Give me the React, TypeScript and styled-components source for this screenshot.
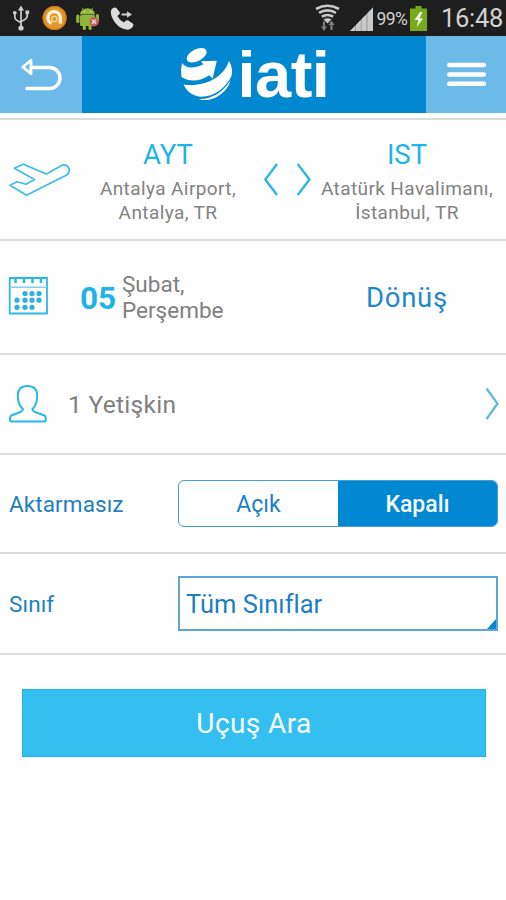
import React from "react";
import styled, { createGlobalStyle } from "styled-components";

const GlobalStyle = createGlobalStyle`
  * { box-sizing: border-box; }
  body { margin: 0; background: #fefefe; font-family: Roboto, "Noto Sans", sans-serif; font-variant-ligatures: none; }
  button { font-family: inherit; border: 0; padding: 0; margin: 0; background: none; }
  svg { display: block; flex: none; }
`;

const Screen = styled.div`
  width: 506px;
  height: 900px;
  display: flex;
  flex-direction: column;
  background: #fefefe;
  overflow: hidden;
`;

const StatusBar = styled.div`
  height: 36px;
  flex: none;
  display: flex;
  justify-content: space-between;
  background: #1e1e1e;
`;

const StatusGroup = styled.div`
  display: flex;
  width: 194px;
`;

const StatusText = styled.span<{ $size: number; $spacing: number; $width: number; $left: number; $top: number }>`
  flex: none;
  width: ${(p) => p.$width}px;
  color: #d2d2d2;
  font-size: ${(p) => p.$size}px;
  letter-spacing: ${(p) => p.$spacing}px;
  line-height: 22px;
  padding-top: ${(p) => p.$top}px;
  margin-left: ${(p) => p.$left}px;
  white-space: nowrap;
`;

const Header = styled.header`
  height: 77px;
  flex: none;
  display: grid;
  grid-template-columns: 82px 344px 80px;
  background: #0288d1;
`;

const HeaderButton = styled.button`
  background: #6cbae8;
`;

const Brand = styled.div`
  display: flex;
  padding-left: 97px;
`;

const BrandName = styled.span`
  margin-left: 2.5px;
  padding-top: 3px;
  font: bold 65px/72px "Liberation Sans", Arial, sans-serif;
  letter-spacing: -0.5px;
  color: #fff;
`;

const HeaderShadow = styled.div`
  height: 7px;
  flex: none;
  border-bottom: 2px solid #dcdcda;
`;

const Row = styled.section<{ $height: number }>`
  height: ${(p) => p.$height}px;
  flex: none;
  display: flex;
  align-items: center;
  border-bottom: 2px solid #dcdcdc;
`;

const RouteRow = styled(Row)`
  display: grid;
  grid-template-columns: 78px 180px 54px 190px;
  align-items: start;
`;

const Airport = styled.div`
  display: flex;
  flex-direction: column;
  align-items: center;
  padding-top: 17px;
`;

const Code = styled.div`
  font-size: 27.5px;
  line-height: 36px;
  color: #1fb4e6;
`;

const Place = styled.div`
  margin-top: 4px;
  font-size: 19px;
  line-height: 23.5px;
  letter-spacing: 0.4px;
  text-align: center;
  color: #828282;
  white-space: nowrap;
`;

const Day = styled.strong`
  margin-left: 32px;
  width: 42px;
  padding-top: 2px;
  font-size: 31.5px;
  color: #1fb4e6;
`;

const DateText = styled.div`
  width: 244px;
  font-size: 22.5px;
  line-height: 26.5px;
  color: #808080;
`;

const ReturnLabel = styled.div`
  padding-top: 1px;
  font-size: 27.5px;
  letter-spacing: 0.7px;
  color: #1e88cf;
`;

const Passengers = styled.div`
  margin-left: 20px;
  flex: 1;
  font-size: 24.5px;
  letter-spacing: 0.3px;
  color: #808080;
`;

const Label = styled.div`
  width: 178px;
  padding-left: 9px;
  font-size: 22.5px;
  letter-spacing: 0.1px;
  color: #1e7fc4;
`;

const Segmented = styled.div`
  width: 320px;
  height: 47px;
  display: grid;
  grid-template-columns: 1fr 1fr;
  border: 1.5px solid #4a9bd8;
  border-radius: 6px;
  overflow: hidden;
`;

const Segment = styled.button<{ $active?: boolean }>`
  padding-top: 1px;
  font-size: 23px;
  letter-spacing: 0;
  font-weight: ${(p) => (p.$active ? 500 : 400)};
  color: ${(p) => (p.$active ? "#f4fbff" : "#1e7fc4")};
  background: ${(p) => (p.$active ? "#0288d1" : "transparent")};
`;

const Select = styled.div`
  width: 320px;
  height: 55px;
  display: flex;
  align-items: center;
  justify-content: space-between;
  border: 2px solid #5fa5da;
  padding-left: 6px;
  font-size: 25.5px;
  color: #1e7fc4;
`;

const Corner = styled.svg`
  align-self: flex-end;
`;

const SearchButton = styled.button`
  margin: 34px 20px 0 22px;
  height: 68px;
  flex: none;
  border: 1.5px solid #1cb5e8;
  background: #35bff1;
  color: #f6fdff;
  font-size: 28px;
  letter-spacing: 0.4px;
`;

const StatusIcons = () => (
  <svg width="140" height="36" viewBox="0 0 140 36">
    <g fill="none" stroke="#cfcfcf" strokeWidth="1.7">
      <path d="M21 9v18M14.8 12v5q0 3 6 5.5M27.2 12v4q0 3-6 5.5" />
    </g>
    <g fill="#cfcfcf">
      <path d="M21 5.5l3 5h-6z" />
      <circle cx="21" cy="28" r="2.6" />
      <circle cx="14.8" cy="12.8" r="1.9" />
      <path d="M25.5 10.5h3.6v3.6h-3.6z" />
    </g>
    <circle cx="54.6" cy="18" r="12" fill="#e4962a" />
    <circle cx="54.6" cy="18" r="11.3" fill="none" stroke="#c8801f" strokeWidth="1.2" />
    <path d="M51.5 23.4a6.2 6.2 0 1 1 8.800-5.600v5.800" fill="none" stroke="#fff3df" strokeWidth="3.2" />
    <circle cx="54.4" cy="19" r="2.7" fill="none" stroke="#f7d9a8" strokeWidth="1.2" />
    <g fill="#8eb63b">
      <path d="M80 14.5a7.5 6.3 0 0 1 15 0z" />
      <rect x="80" y="15" width="15" height="11" rx="1.5" />
      <rect x="76.2" y="14.5" width="3.2" height="8.5" rx="1.5" />
      <rect x="95.8" y="14" width="3.2" height="8" rx="1.5" />
      <rect x="82.7" y="24" width="3.2" height="6" rx="1.5" />
      <rect x="88.5" y="24" width="3.2" height="6" rx="1.5" />
    </g>
    <path d="M83.5 9.8l-1.5-2M91.5 9.8l1.5-2" stroke="#8eb63b" />
    <circle cx="84.4" cy="11.8" r=".7" fill="#e8f0d0" />
    <circle cx="90.6" cy="11.8" r=".7" fill="#e8f0d0" />
    <circle cx="94" cy="21.8" r="4.7" fill="#c0605a" />
    <path d="M92 19.8l4 4M96 19.8l-4 4" stroke="#f1dcd8" strokeWidth="1.4" />
    <path
      d="M112.6 8.3q2-1.4 3.8-.4l3.3 4.4q.6 1.3-.6 2.3l-1.8 1.5q2.3 4.3 6.7 6.4l1.7-1.8q1.2-1 2.6-.2l4.4 2.9q1.5 1.2.3 2.8-2.4 4-6.8 3.4-6.2-1-10.8-6.6-4.5-5.7-4.6-11.2.1-2.3 1.8-3.5z"
      fill="#dcdcdc"
    />
    <path d="M121.5 14.500h7" stroke="#cfcfcf" strokeWidth="2" />
    <path d="M127 11.300l5 3.200-5 3.200z" fill="#cfcfcf" />
  </svg>
);

const SignalIcons = () => (
  <svg width="62" height="36" viewBox="312 0 62 36">
    <g fill="none" stroke="#c9c9c9" strokeWidth="2.6">
      <path d="M316 9q11.5-6.4 23 0" />
      <path d="M319 12.900q8.500-5 17 0" />
      <path d="M321.800 16.700q5.700-3.400 11.400 0" />
    </g>
    <path d="M323.500 19.300q4-2.300 8 0l-4 4.200z" fill="#c9c9c9" />
    <path d="M324 21.500v6M331.500 30v-6" stroke="#7d7d7d" strokeWidth="2.2" />
    <path d="M320.900 26.500h6.200l-3.100 4.500zM328.400 25h6.200l-3.100-4.500z" fill="#7d7d7d" />
    <path d="M350 31L373 7.500V31z" fill="#9b9b9b" />
    <path d="M350 31h5v-5.100zM356 31h4.700v-10.900l-4.700 4.800zM361.700 31h4.700V14.200l-4.700 4.800zM367.500 31h5.500V7.500l-5.500 5.600z" fill="#c9c9c9" />
  </svg>
);

const BatteryIcon = () => (
  <svg width="19" height="36" viewBox="0 0 19 36">
    <path d="M5.5 6h6v2.5h5.5V31H0V8.500h5.500z" fill="#78a91c" />
    <path d="M10 12l-5.500 8h4l-2 7.500L13 18.500H9.500l3-6.500z" fill="#f0f5e4" />
  </svg>
);

const BackIcon = () => (
  <svg width="82" height="77" viewBox="0 0 82 77" fill="none" stroke="#fff" strokeWidth="3.4" strokeLinecap="round" strokeLinejoin="round">
    <path d="M31 31.500h18.500a10.500 10.500 0 0 1 0 21H27" />
    <path d="M31 24.300v13.400l-8.200-6.700z" strokeWidth="2.8" />
  </svg>
);

const MenuIcon = () => (
  <svg width="80" height="77" viewBox="0 0 80 77" stroke="#fff" strokeWidth="4.6" strokeLinecap="round">
    <path d="M23.300 29h34.500M23.300 38.500h34.500M23.300 47.700h34.500" />
  </svg>
);

const GlobeLogo = () => (
  <svg width="56" height="77" viewBox="179 36 56 77" fill="#fff">
    <ellipse cx="196.7" cy="55.3" rx="10.8" ry="5.9" transform="rotate(-27 196.7 55.3)" />
    <path d="M182 63C186 68.500 193 69 203.500 64.200L200.800 61.300 216.800 60.800 212.600 78.500 209.300 75.200C200 81.500 190 82.500 181.500 77Q180.500 69 182 63z" />
    <path d="M183.500 84.500C205 87.500 224 77 229 60.700Q233.500 69 231.500 76C226 88 213 97.500 200 96.700 191 95.500 186 90 183.500 84.500z" />
    <path d="M198.500 99C212 99.500 223 92 230.500 80.500 227.500 93 211 103.500 198.500 99z" />
  </svg>
);

const PlaneIcon = () => (
  <svg width="78" height="110" viewBox="0 120 78 110" fill="none" stroke="#3dbdea" strokeWidth="1.7" strokeLinejoin="round">
    <path d="M46.500 174L23.300 164.200 14.300 168.300 34.500 179.500 26 184.300 17 181.800 10 185.300 26.500 195.200 66.300 175.300Q70.500 172 69 168.500 66.500 163.500 61.500 165.500z" />
  </svg>
);

const SwapIcon = () => (
  <svg width="54" height="118" viewBox="258 120 54 118" fill="none" stroke="#27b5e6" strokeWidth="2.3">
    <path d="M277 164L265.300 179.500 277 195M297.700 164L309.500 179.500 297.700 195" />
  </svg>
);

const dots = [
  [25, 34.5], [32, 34.5], [39, 34.5],
  [17, 41.2], [25, 41.2], [32, 41.2], [39, 41.2],
  [17, 48.3], [25, 48.3], [32, 48.3],
];

const CalendarIcon = () => (
  <svg width="48" height="60" viewBox="0 8 48 60">
    <path d="M9.700 19h37.300v35.500H9.700z" fill="none" stroke="#2cb8e8" strokeWidth="1.8" />
    <path d="M10 28.200h37" stroke="#7fd2f0" strokeWidth="1.5" />
    <path d="M15.500 19v5M24 19v5M32.500 19v5M41 19v5" stroke="#2cb8e8" strokeWidth="2.6" />
    {dots.map(([x, y]) => (
      <circle key={`${x}-${y}`} cx={x} cy={y} r="2.6" fill="#2cb0e4" />
    ))}
  </svg>
);

const PersonIcon = () => (
  <svg width="48" height="50" viewBox="0 379 48 50" fill="none" stroke="#27b7e8" strokeWidth="2" strokeLinejoin="round">
    <path d="M23 409.200C19.500 406 17.800 401 17.800 396 17.500 389.500 21.500 386 27.500 386 33.500 386 37.500 389.500 37.200 396 37.200 401 35.500 406 32.300 409.200Q32.500 411 35 412L44.500 415.500Q46 416.500 45.800 420 45.800 421.500 44.500 421.500H11.300Q10 421.500 10 420 9.800 416.500 11.300 415.500L20.500 412Q22.800 411 23 409.200z" />
  </svg>
);

const NextIcon = () => (
  <svg width="22" height="40" viewBox="484 384 22 40" fill="none" stroke="#60b8e1" strokeWidth="2.3">
    <path d="M486.500 388.500L497.500 403.700 486.500 419" />
  </svg>
);

export default function App() {
  return (
    <>
      <GlobalStyle />
      <Screen>
        <StatusBar>
          <StatusIcons />
          <StatusGroup>
            <SignalIcons />
            <StatusText $size={17.5} $spacing={-0.6} $width={33} $left={2.5} $top={8}>99%</StatusText>
            <BatteryIcon />
            <StatusText $size={25.5} $spacing={-0.3} $width={64} $left={12.5} $top={7}>16:48</StatusText>
          </StatusGroup>
        </StatusBar>
        <Header>
          <HeaderButton aria-label="Geri"><BackIcon /></HeaderButton>
          <Brand>
            <GlobeLogo />
            <BrandName>iati</BrandName>
          </Brand>
          <HeaderButton aria-label="Menü"><MenuIcon /></HeaderButton>
        </Header>
        <HeaderShadow />
        <RouteRow $height={121}>
          <PlaneIcon />
          <Airport>
            <Code>AYT</Code>
            <Place>Antalya Airport,<br />Antalya, TR</Place>
          </Airport>
          <SwapIcon />
          <Airport>
            <Code>IST</Code>
            <Place>Atatürk Havalimanı,<br />İstanbul, TR</Place>
          </Airport>
        </RouteRow>
        <Row $height={114}>
          <CalendarIcon />
          <Day>05</Day>
          <DateText>Şubat,<br />Perşembe</DateText>
          <ReturnLabel>Dönüş</ReturnLabel>
        </Row>
        <Row $height={100}>
          <PersonIcon />
          <Passengers>1 Yetişkin</Passengers>
          <NextIcon />
        </Row>
        <Row $height={99}>
          <Label>Aktarmasız</Label>
          <Segmented>
            <Segment>Açık</Segment>
            <Segment $active>Kapalı</Segment>
          </Segmented>
        </Row>
        <Row $height={101}>
          <Label>Sınıf</Label>
          <Select>
            Tüm Sınıflar
            <Corner width="9" height="10" viewBox="0 0 9 10"><path d="M9 0v10H0z" fill="#0288d1" /></Corner>
          </Select>
        </Row>
        <SearchButton>Uçuş Ara</SearchButton>
      </Screen>
    </>
  );
}
